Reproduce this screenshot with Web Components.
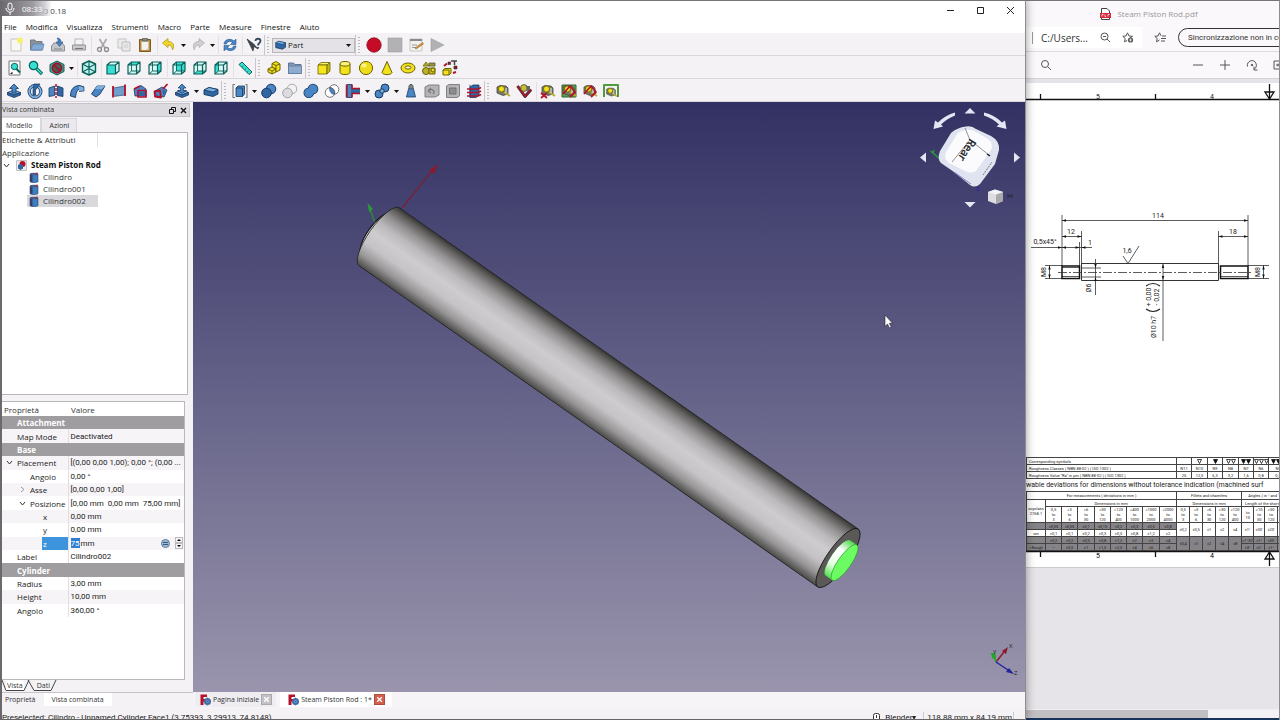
<!DOCTYPE html>
<html lang="it">
<head>
<meta charset="utf-8">
<title>FreeCAD 0.18</title>
<style>
  html, body { margin: 0; height: 100%; overflow: hidden; background: #e6e4e8; }
  body { font: 8px/12px "Open Sans", "Noto Sans", sans-serif; color: #222; }
</style>
</head>
<body>
<desk-top></desk-top>

<script>
/* ---------- helpers ---------- */
const define = (name, css, html, setup) => {
  customElements.define(name, class extends HTMLElement {
    connectedCallback() {
      if (this.shadowRoot) return;
      const root = this.attachShadow({ mode: 'open' });
      const body = typeof html === 'function' ? html(this) : html;
      root.innerHTML = `<style>*{box-sizing:border-box}button,select,input{font:inherit;color:inherit;margin:0;padding:0;border:0;background:none}${css}</style>${body}`;
      if (setup) setup(this, root);
    }
  });
};

/* ---------- icon drawings, 16 x 16 ---------- */
const P = (d, fill = 'none', stroke = 'none', w = 1, extra = '') =>
  `<path d="${d}" fill="${fill}" stroke="${stroke}" stroke-width="${w}" stroke-linejoin="round" ${extra}/>`;
const BL = '#4a86c4', BD = '#173a63', BM = '#2f66a3', LT = '#7fb0e0', TE = '#35e0d2', TD = '#0c5f59', YE = '#f2e21c', YD = '#6b6200', RE = '#b5122a', GY = '#b4b4b6', GD = '#808084';

const faces = {
  front: 'M2 5H10.5V14H2Z', top: 'M2 5L5.5 2H14L10.5 5Z', right: 'M10.5 5L14 2V11L10.5 14Z',
  rear: 'M5.5 2H14V11H5.5Z', bottom: 'M2 14L5.5 11H14L10.5 14Z', left: 'M2 5L5.5 2V11L2 14Z'
};
const wire = f => P('M2 5L5.5 2H14V11L10.5 14H2Z', '#d9f7f3') + P(faces[f], TE) +
  (f === 'front' ? '' : P('M2 14L5.5 11H14M5.5 11V2', 'none', TD, .9)) +
  P('M2 5L5.5 2H14V11L10.5 14H2ZM2 5H10.5V14M10.5 5L14 2', 'none', TD, 1.2);
const solid = (a, b, c, s) => P('M2 5L5 2.5H14L11 5Z', b, s, .8) + P('M2 5H11V14H2Z', a, s, .8) + P('M11 5L14 2.5V11L11 14Z', c, s, .8);
const ball = (x, y, r, f = BL, s = BD) => `<circle cx="${x}" cy="${y}" r="${r}" fill="${f}" stroke="${s}"/>`;
const tape = P('M2 4L5 2.5L11 3L13 5V11L8 12.5L2 10Z', '#77776a', '#4a4a42', .8) +
  `<circle cx="6.5" cy="6" r="3" fill="${YE}" stroke="${YD}" stroke-width=".8"/>` + P('M9 9L15 13', 'none', '#b6ad2e', 1.8) + P('M11 5V10', 'none', '#ddd', 1.2);
const slab = P('M1.5 9.5L8 7L14.5 9.5L8 12Z', LT, BD, .8) + P('M1.5 9.5V12L8 14.5L14.5 12V9.5L8 12Z', BM, BD, .8);

const ICONS = {
  'new': P('M3 2H13V14H3Z', '#f7f7f4', '#c4c4c0') + `<circle cx="12" cy="3.5" r="3" fill="#f7f06a"/>`,
  open: P('M1.5 3H6L7 4.5H13V13H1.5Z', '#8f9398', '#75797e') + P('M1.5 13L4 7H15L13.5 13Z', '#82aad4', '#5a84b2', .8),
  save: P('M1.5 9L4 6H12L14.5 9V14H1.5Z', '#c2c5ca', '#8b8f94') + P('M7 1C10 1 11 3 11 5H13L9.5 9.5L6 5H8C8 3 8 2 7 1Z', '#4d7fb5', '#2d5b8d', .6) + P('M4 12H12', 'none', '#888'),
  print: P('M4 2H12V8H4Z', '#f4f4f4', '#b7b7b7') + P('M1.5 8H14.5V13H1.5Z', '#c9c9cb', '#96969a') + P('M4 11.5H12', 'none', '#777'),
  cut: P('M4.5 2L10 11M11.5 2L6 11', 'none', '#a6a6a8', 1.6) + `<circle cx="4.5" cy="12.5" r="2" fill="none" stroke="#8b8b90" stroke-width="1.3"/><circle cx="11.5" cy="12.5" r="2" fill="none" stroke="#8b8b90" stroke-width="1.3"/>`,
  copy: P('M2 2H10V11H2Z', '#ececec', '#c4c4c6') + P('M6 5H14V14H6Z', '#e8e9e8', '#bcbcbe') + P('M8 8H12M8 10H12', 'none', '#ccc'),
  paste: P('M2.5 2.5H13.5V14.5H2.5Z', '#b78b43', '#7d5a20') + P('M4.5 4.5H11.5V13H4.5Z', '#f4f2ee') + P('M5.5 1.5H10.5V4H5.5Z', '#8c8c8c', '#5c5c5c', .8) + P('M11.5 13V10.5L9 13Z', '#c9c9c9'),
  undo: P('M1.5 6L7 1.5V4.5C12 4.5 14 8 11.5 13C11.5 10 10 8 7 8V10.5Z', '#efd82c', '#b79a0e', .8),
  redo: P('M14.5 6L9 1.5V4.5C4 4.5 2 8 4.5 13C4.5 10 6 8 9 8V10.5Z', '#cfcfd1', '#b0b0b4', .8),
  refresh: P('M2 7C2 3 8 0.5 12 4L14 2V7.5H8.5L10.5 5.5C8 3.5 5 4.5 4.5 7Z', BL, '#26578c', .6) + P('M14 9C14 13 8 15.5 4 12L2 14V8.5H7.5L5.5 10.5C8 12.5 11 11.5 11.5 9Z', BL, '#26578c', .6),
  whats: P('M1 2L7 14L8 9.5L12 12L7.5 6.8Z', '#3c4854', '#222', .6) + `<path d="M9.500 4C9.500 1 14.500 1 14.500 4C14.500 6 12 6 12 8.500M12 10V11.500" fill="none" stroke="#34495e" stroke-width="1.800"/>`,
  rec: `<circle cx="8" cy="8" r="7.200" fill="#c50b26" stroke="#8a0a1b" stroke-width=".8"/>`,
  stop: P('M1 1H15V15H1Z', '#b2b2b4', '#a0a0a2', .6),
  macro: P('M2 2H14V14H2Z', '#f1f1ee', '#bdbdbd', .8) + P('M2 2H14V4H2Z', '#8a8a8c') + P('M4 8H9M4 10.5H8', 'none', '#999') + P('M7 11L14.5 5.5L15.5 7L8 12Z', '#d99a3e', '#8a5a16', .5),
  play: P('M2 1.5L15 8L2 14.5Z', '#b2b2b4', '#9c9c9e', .6),

  fitall: P('M2 1H13V15H2Z', '#fff', '#777') + `<circle cx="7.500" cy="6.500" r="3.200" fill="${TE}" stroke="${TD}"/>` + P('M9.5 9L13 12.5', 'none', TD, 2) + P('M3 14L5.5 11.5V14Z', '#222'),
  fitsel: `<circle cx="5.500" cy="5.500" r="4.200" fill="${TE}" stroke="${TD}" stroke-width="1.200"/>` + P('M8.5 8.5L14 14', 'none', TD, 3.2) + P('M8.8 8.8L13.5 13.5', 'none', TE, 1.4),
  drawstyle: P('M8 1L15 4.5V11.5L8 15L1 11.5V4.5Z', '#4d9c94', TD) + `<circle cx="8" cy="8" r="4.600" fill="#4d5a58" stroke="#a01024" stroke-width="1.700"/>` + P('M5 5L11 11', 'none', '#a01024', 1.7),
  iso: P('M8 1L14.5 4V12L8 15L1.5 12V4Z', '#bdf3ee', TD, 1.4) + P('M1.5 4L8 7.5L14.5 4M8 7.5V15M8 1V7.5M1.5 12L8 8.5L14.5 12', 'none', TD, 1.1),
  vfront: wire('front'), vtop: wire('top'), vright: wire('right'), vrear: wire('rear'), vbottom: wire('bottom'), vleft: wire('left'),
  ruler: P('M2 4.5L5 2L15 12L12 14.5Z', TE, TD) + P('M5 7.3L6.5 6M7.5 9.8L9 8.5M10 12.3L11.5 11', 'none', TD, .8),
  part: P('M2 9L6 7L10 9V12L6 14L2 12Z', YE, YD) + P('M6 3.5L10 1.5L14 4V10L10 12V9L6 7Z', YE, YD) + P('M6 3.5L10 5.5L14 4M10 5.5V9M2 9L6 11L10 9M6 11V14', 'none', YD),
  group: P('M1.5 3H6.5L8 4.5H14V13.5H1.5Z', '#7f98b8', '#5c7594') + P('M1.5 6H14.5V13.5H1.5Z', '#8fabcd', '#5c7ba0', .8),

  box: solid('#f5e51e', '#fbf36a', '#c9bb14', YD),
  cyl: P('M3 4V12.5C3 15.2 13 15.2 13 12.5V4Z', YE, YD) + `<ellipse cx="8" cy="3.800" rx="5" ry="2.300" fill="#faf27a" stroke="${YD}"/>`,
  sphere: ball(8, 8, 6.6, '#eddc1c', YD) + `<ellipse cx="6" cy="5.500" rx="2.500" ry="2" fill="#fbf48a"/>`,
  cone: P('M8 1.5L13 12.5C12 15.3 4 15.3 3 12.5Z', YE, YD),
  torus: `<ellipse cx="8" cy="8" rx="7" ry="5" fill="${YE}" stroke="${YD}"/><ellipse cx="8" cy="7.500" rx="3" ry="1.600" fill="#f4f2f5" stroke="${YD}"/>`,
  prims: P('M2 6L5 2L8 6Z', '#b6ad2e', YD, .8) + P('M8 3H14V6H8Z', '#9b9748', '#5a5620', .8) + ball(5, 11, 3.5, '#b9b032', YD) + P('M8 8H14V14H8Z', '#c7bd24', YD) + ball(12, 10, 2, '#e3d836', YD),
  shape: P('M1 10L3 8.5H9V13L7 15H1Z', YE, YD) + P('M1 10H7V15', 'none', YD) + P('M9 1H15M12.5 1V5', 'none', '#444', 1.5) + P('M2 6L5 3.5M12 7L14.5 8.5M11 13L14 12', 'none', RE, 2) + P('M12 6H15V9H12ZM6 2H8.5V4.5H6Z', '#8b1b2a', '#333', .6),

  extrude: slab + P('M8 1L12.5 5.5H10V10H6V5.5H3.5Z', BL, BD, .8),
  revolve: `<circle cx="8" cy="8.500" r="5.800" fill="none" stroke="${BD}" stroke-width="3.400"/><circle cx="8" cy="8.500" r="5.800" fill="none" stroke="${LT}" stroke-width="1.900"/>` + P('M7 1H13L8.5 7V12H6V7Z', BM, BD, .7),
  mirror: P('M1 5L6.5 3V12.5L1 13.5Z', BL, BD, .8) + P('M15 5L9.5 3V12.5L15 13.5Z', BM, BD, .8) + P('M8 1V15', 'none', RE, 1.5, 'stroke-dasharray="3 1"'),
  fillet: P('M1.5 13C1.5 6 5 3 10 2.5L15 4C9.5 5 7 8 6.5 14.5Z', BL, BD, .9) + P('M10 2.5L15 4V8L10 8.5', LT, BD, .7),
  chamfer: P('M1.5 11L7 3H15L10 11L6 14Z', BL, BD, .9) + P('M7 3H15L12 6H5Z', LT),
  ruled: P('M2 5L14 3V12L2 13.5Z', '#6f9dcc', BD, .6) + P('M2 3V14.5M14 1.5V13', 'none', RE, 1.8),
  loft: P('M2 6L9 2.5L14 6V13L3 13Z', BL, BD, .8) + P('M6 7.5H14V14H6ZM2 6L8 3', 'none', RE, 1.7) + P('M7 8.5H13V13H7Z', BM),
  sweep: P('M2 8L9 4L14 7L11 14L3 13Z', BL, BD, .8) + P('M1.5 8.5L7 7.5L8 14.5L2 13.5ZM10 6L14.5 1', 'none', RE, 1.8) + P('M9 7L13 8L11 13Z', BM),
  offset: slab + P('M8 1L12 5H9.5V7.5H12.5L8 10.5L3.5 7.5H6.5V5H4Z', BL, BD, .7),
  thick: P('M1 7L6 4.5L15 6.5V11L10 13.5L1 11.5Z', BM, BD, .9) + P('M1 7L6 4.5L15 6.5L10 9Z', LT, BD, .8),
  compound: P('M4 5L6 3H12.5V11L10.5 13.5H4Z', BL, BD, .8) + P('M4 5H10.5V13.5', 'none', BD, .8) + P('M3 1.5H1V14.5H3M13.5 1.5H15V14.5H13.5', 'none', '#777', 1.1),
  boolean: ball(10, 6, 4.8, BL) + ball(5.5, 10, 4.8, BM),
  cutb: ball(10, 6, 4.8, '#f3f1f4', '#aaa') + ball(5.5, 10, 4.8, '#dcdcde', '#a3a3a6'),
  union: `<g stroke="${BD}" stroke-width="2"><circle cx="10" cy="6" r="4.300"/><circle cx="5.800" cy="9.800" r="4.300"/></g><g fill="${BL}"><circle cx="10" cy="6" r="4.500"/><circle cx="5.800" cy="9.800" r="4.500"/></g>`,
  inter: `<circle cx="10" cy="6.500" r="4.800" fill="#fff" stroke="#777"/><circle cx="6" cy="9.500" r="4.800" fill="#fff" stroke="#777"/>` + P('M5.7 4.7C8 4.4 10.8 7 10.4 11.2C8 11.5 5.2 9 5.7 4.7Z', BL, BD, .6),
  join: P('M2 1.5H7V14.5H2Z', BL, BD, .8) + P('M7 5.5H15V10.5H7Z', BM) + P('M1.5 1.5V14.5M7 1.5V5.5H15M7 14.5V10.5H15', 'none', RE, 1.5),
  split: ball(11, 5, 4) + ball(5, 11, 4) + `<circle cx="8" cy="8" r="2.200" fill="${LT}" stroke="${BD}"/>`,
  check: P('M5.5 6L8 1L10.5 6L12.5 14H3.5Z', BL, BD, .8) + `<circle cx="8" cy="3.800" r="2.200" fill="#7e8890" stroke="#444" stroke-width=".7"/>`,
  defeat: P('M1 4L5 2H15V12L11 14H1Z', GY, GD) + P('M4 8C8 5 12 8 9 11M4 8L7 5M4 8L7 10', 'none', '#77777a', 1.3),
  defeat2: P('M1.5 3L4 1.5H14.5V13L12 14.5H1.5Z', GY, GD) + P('M4.5 5H11V11H4.5Z', '#8c8c90', '#707074'),
  section: P('M4 4L7 2H13V12L10 14.5H4Z', BM, BD, .8) + P('M4 1.8V14.5', 'none', BD, .8) + P('M1 6H12L15 4.5M1 9.5H12L15 8M1 13H12L15 11.5', 'none', RE, 1.6),

  mlin: tape,
  mang: P('M1.5 3L9 13.5L15 6.5', 'none', '#333', 3) + P('M1.5 3L9 13.5L15 6.5', 'none', RE, 1.5) + `<circle cx="8" cy="5" r="3.400" fill="#c9c02d" stroke="#444" stroke-width=".8"/><path d="M10 3H14V7L11 8Z" fill="#666"/>`,
  mclr: tape + P('M1 10L7 15M7 10L1 15', 'none', RE, 1.8),
  mall: P('M1 2H15V14H1Z', '#5c9b52', '#35682d') + tape + P('M2 11L9 3L14 9L9 14', 'none', RE, 1.8),
  m3d: tape + P('M2 11L9 3L14 9L9 14', 'none', RE, 1.8),
  mdelta: P('M1 14V2H15V14', 'none', '#4f9a3f', 2) + `<g transform="translate(2 3) scale(.8)">${tape}</g>`
};

define('x-icon', ':host{display:block;width:16px;height:16px;flex:none}svg{display:block;width:100%;height:100%}',
  el => `<svg viewBox="0 0 16 16" aria-hidden="true">${ICONS[el.getAttribute('name')]}</svg>`);

define('tool-button', ':host{display:block;flex:none}button{display:grid;place-items:center;width:21px;height:20px}',
  el => `<button type="button" aria-label="${el.getAttribute('name')}"><x-icon name="${el.getAttribute('name')}"></x-icon></button>`);
define('tool-arrow', ':host{display:block;flex:none}button{display:grid;place-items:center;width:8px;height:20px}',
  '<button type="button" aria-label="menu"><svg width="5" height="3" viewBox="0 0 5 3"><path d="M0 0H5L2.5 3Z" fill="#111"/></svg></button>');
define('tool-gap', ':host{display:block;flex:none;width:3px;height:18px;border-right:1px solid #e2e0e4}', '');
define('tool-handle', ':host{display:block;flex:none;width:8px;height:20px;border-left:1px solid #c9c7cc;padding:2px 0 2px 2px}i{display:block;width:2px;height:100%;background:repeating-linear-gradient(#bbb 0 1px,transparent 1px 3px)}', '<i></i>');

define('tool-row', ':host{display:flex;align-items:center;height:23px;box-sizing:border-box;padding:2px 0 0 var(--start,2px);background:#f4f2f5;border-bottom:1px solid #d8d6da}',
  el => el.getAttribute('items').trim().split(/\s+/).map(t =>
    t === 'v' ? '<tool-arrow></tool-arrow>' : t === '-' ? '<tool-gap></tool-gap>' : t === '|' ? '<tool-handle></tool-handle>' :
    t === '@' ? '<workbench-select></workbench-select>' : `<tool-button name="${t}"></tool-button>`).join(''));

define('workbench-select', `:host{display:flex;align-items:center;box-sizing:border-box;flex:none;position:relative;width:83px;height:15px;background:#e4e2e6;border:1px solid #b9b7bc}
  svg.b{flex:none;width:12px;height:12px;margin-left:2px}select{appearance:none;flex:1;min-width:0;height:12px;line-height:12px;padding-left:1px}svg.a{flex:none;margin-right:3px}`,
  `<svg class="b" viewBox="0 0 16 16">${P('M1 5L5 3L14 5V11L10 13.5L1 11.5Z', BM, BD)}${P('M1 5L5 3L14 5L10 7Z', LT, BD, .6)}</svg>
  <select aria-label="Ambiente"><option>Part</option></select><svg class="a" width="5" height="3" viewBox="0 0 5 3"><path d="M0 0H5L2.5 3Z" fill="#111"/></svg>`);

/* ---------- window title and menu ---------- */
define('title-bar', `:host{display:flex;align-items:center;height:19px;background:#fff;position:relative}
  .name{flex:1;padding-left:14px;color:#444}
  .rec{position:absolute;left:0;top:0;width:50px;height:15px;padding-left:2px;display:flex;align-items:center;gap:6px;color:#fff;background:linear-gradient(90deg,#6d6b70,#9b999e 60%,#c9c8ccdd 85%,#fff0)}
  button{width:30px;height:18px;display:grid;place-items:center}`,
  `<span class="name">FreeCAD 0.18</span>
  <div class="rec"><svg width="12" height="14" viewBox="0 0 12 14"><rect x="4" y="1" width="4" height="7" rx="2" fill="none" stroke="#fff"/><path d="M2 6C2 11.500 10 11.500 10 6M6 10V13" fill="none" stroke="#fff"/></svg><span>08:33</span></div>
  <button aria-label="Riduci"><svg width="9" height="9"><path d="M1 4.500H8" stroke="#222"/></svg></button>
  <button aria-label="Ingrandisci"><svg width="9" height="9"><path d="M1.500 1.500H7.500V7.500H1.500Z" fill="none" stroke="#222"/></svg></button>
  <button aria-label="Chiudi"><svg width="9" height="9"><path d="M1 1L8 8M8 1L1 8" stroke="#222"/></svg></button>`);

define('menu-bar', ':host{display:flex;gap:9px;height:13px;padding-left:2px;background:#fff}button{line-height:12px;white-space:nowrap;color:#111}',
  ['File', 'Modifica', 'Visualizza', 'Strumenti', 'Macro', 'Parte', 'Measure', 'Finestre', 'Aiuto'].map(t => `<button type="button">${t}</button>`).join(''));

/* ---------- combined view ---------- */
const chev = open => `<svg width="7" height="7" viewBox="0 0 7 7" aria-hidden="true"><path d="${open ? 'M1 2L3.500 5L6 2' : 'M2 1L5 3.500L2 6'}" fill="none" stroke="${open ? '#333' : '#999'}"/></svg>`;

define('model-tree', `:host{display:block;box-sizing:border-box;background:#fff;border:1px solid #b9b7bc;border-left:0;overflow:hidden}
  .h{line-height:14px;height:14px;width:96px;border-right:1px solid #e2e0e4}
  .g{line-height:12px}
  ul{margin:0;padding:0;list-style:none}
  li{display:flex;align-items:center;gap:4px;height:12px;line-height:12px}
  .doc{padding-left:1px;gap:4px;font-weight:700;color:#111}
  .doc svg:first-child{margin-right:2px}
  .obj{margin-left:25px;padding-left:2px;width:71px;gap:4px}
  .sel{background:#d9d8dc}`,
  `<div class="h">Etichette &amp; Attributi</div><div class="g">Applicazione</div>
  <ul><li class="doc">${chev(true)}<svg width="11" height="11" viewBox="0 0 11 11"><path d="M.5.500H10.500V10.500H.500Z" fill="#e9e9ec" stroke="#c4c4c8"/><circle cx="6.500" cy="4" r="3" fill="${RE}"/><path d="M2 5L4.500 4L7 5V8.500L4.500 10L2 8.500Z" fill="${BM}"/></svg>Steam Piston Rod</li>
  ${['Cilindro', 'Cilindro001', 'Cilindro002'].map((t, i) => `<li class="obj${i === 2 ? ' sel' : ''}"><svg width="10" height="11" viewBox="0 0 10 11"><path d="M1 2V9.500C1 11 9 11 9 9.500V2Z" fill="#3c7fc0" stroke="#2a3f66" stroke-width=".6"/><path d="M1 2H3.500V10.500L1 9.500Z" fill="#37406a"/><ellipse cx="5" cy="2" rx="4" ry="1.300" fill="#4d5c86"/><path d="M8 .500V3" stroke="${RE}"/></svg>${t}</li>`).join('')}</ul>`);

const PROPS = [
  ['g', 'Attachment'], ['Map Mode', 'Deactivated', 0], ['g', 'Base'],
  ['Placement', '[(0,00 0,00 1,00); 0,00 °; (0,00 ...', 0, 'o'], ['Angolo', '0,00 °', 1], ['Asse', '[0,00 0,00 1,00]', 1, 'c'],
  ['Posizione', '[0,00 mm&nbsp; 0,00 mm&nbsp; 75,00 mm]', 1, 'o'], ['x', '0,00 mm', 2], ['y', '0,00 mm', 2], ['z', null, 2],
  ['Label', 'Cilindro002', 0], ['g', 'Cylinder'], ['Radius', '3,00 mm', 0], ['Height', '10,00 mm', 0], ['Angolo', '360,00 °', 0]
];
define('property-editor', `:host{display:block;box-sizing:border-box;background:#fff;border:1px solid #b9b7bc;border-left:0;overflow:hidden}
  table{width:100%;height:215px;table-layout:fixed;border-collapse:collapse;line-height:11px}
  col.n{width:66px} th,td{padding:0;text-align:left;font-weight:400;white-space:nowrap;vertical-align:middle;color:#222}
  thead tr{height:14px} thead th{padding-left:2px;color:#333} td{padding-left:2px;border-left:1px solid #e0dee2}
  td{font-family:"Roboto",sans-serif}
  tbody tr:nth-child(even){background:#f6f4f7}
  tbody tr.g th{background:#9f9da0;color:#fff;font-weight:700;padding-left:15px}
  .k{display:flex;align-items:center;padding-left:var(--in)} .k i{display:block;width:13px;flex:none;line-height:0;padding-left:2px}
  .z{background:linear-gradient(90deg,transparent 40px,#3d93dc 40px);color:#fff}
  .ed{display:flex;align-items:center;height:11px}
  input{width:9px;height:10px;background:#2f7fd0;color:#fff}
  label{flex:1;padding-left:1px}.sp{display:grid;width:8px;margin:0 1px 0 5px}.sp button{height:6px;border:1px solid #bbb;display:grid;place-items:center;background:#f4f4f4;line-height:0}`,
  `<table><colgroup><col class="n"><col></colgroup><thead><tr><th>Proprietà</th><th style="padding-left:3px">Valore</th></tr></thead><tbody>${
    PROPS.map(([n, v, l, x]) => n === 'g' ? `<tr class="g"><th colspan="2">${v}</th></tr>` :
      `<tr><th class="${n === 'z' ? 'z' : ''}"><div class="k" style="--in:${[2, 15, 28][l]}px"><i>${x ? chev(x === 'o') : ''}</i>${n}</div></th><td>${v ??
        `<div class="ed"><input id="z" value="75"><label for="z">mm</label><svg width="9" height="9" viewBox="0 0 9 9"><circle cx="4.500" cy="4.500" r="4" fill="#9fb8cf" stroke="#5c7fa2"/><path d="M2 3.500H7M2 5.500H7" stroke="#2f5b86"/></svg><span class="sp"><button aria-label="più"><svg width="4" height="2"><path d="M0 2L2 0L4 2Z"/></svg></button><button aria-label="meno"><svg width="4" height="2"><path d="M0 0L2 2L4 0Z"/></svg></button></span></div>`}</td></tr>`).join('')
  }</tbody></table>`);

define('combo-view', `:host{display:flex;flex-direction:column;box-sizing:border-box;min-height:0;padding-top:1px;background:#f4f2f5;color:#333}
  header,.tabs,.cut,.low{font-size:7px}
  header{display:flex;align-items:center;height:14px;margin-right:3px;background:#dcdade;border:1px solid #c6c4c9;border-left:0}
  header span{flex:1} header button{width:11px;height:11px;display:grid;place-items:center}
  .tabs{display:flex;align-items:flex-end;height:15px}
  .tabs button{height:14px;line-height:13px;padding:0 7px;background:#ebe9ed;border:1px solid #d9d7db;border-bottom:0}
  .tabs button.on{background:#fff;height:15px;padding:0 8px 0 4px;border-left:0}
  model-tree{flex:263;min-height:0;margin-right:5px} property-editor{flex:279;min-height:0;margin:6px 8px 0 0}
  .cut{display:flex;height:13px;align-items:flex-start;border-bottom:1px solid #c6c4c9}
  .cut button{line-height:11px;height:11px;padding:0 1px;border-bottom:1px solid #444}.cut .on{background:#fff}
  .low{display:flex;height:15px}.low button{height:13px;line-height:13px;padding:0 8px 0 3px}.low .on{background:#fff;padding:0 8px}`,
  `<header><span>Vista combinata</span><button aria-label="Sgancia"><svg width="7" height="7" viewBox="0 0 7 7"><path d="M2.500 2V.500H6.500V4.500H5M.500 2.500H4.500V6.500H.500Z" fill="none" stroke="#111"/></svg></button><button aria-label="Chiudi"><svg width="7" height="7" viewBox="0 0 7 7"><path d="M1 1L6 6M6 1L1 6" stroke="#111" stroke-width="1.400"/></svg></button></header>
  <div class="tabs"><button class="on">Modello</button><button>Azioni</button></div>
  <model-tree></model-tree><property-editor></property-editor>
  <div class="cut"><svg width="4" height="11"><path d="M0 0L4 10.500" stroke="#444" fill="none"/></svg><button class="on">Vista</button><svg width="12" height="11"><path d="M0 10.500L5 0M4 0L10 10.500H12" stroke="#444" fill="none"/></svg><button>Dati</button><svg width="6" height="11"><path d="M0 10.500L5 0" stroke="#444" fill="none"/></svg></div>
  <div class="low"><button>Proprietà</button><button class="on">Vista combinata</button></div>`);

/* ---------- 3D view ---------- */
define('view-3d', `:host{display:block;min-height:0;overflow:hidden;background:linear-gradient(#333163,#67658a 52%,#9a95ad)}
  svg{display:block;width:100%;height:100%} text{font-family:"Open Sans",sans-serif}`,
  `<svg viewBox="193 102 832 590" preserveAspectRatio="xMidYMid slice">
  <defs><linearGradient id="s" x1="0" y1="0" x2="0" y2="1"><stop offset="0" stop-color="#363634"/><stop offset=".08" stop-color="#62615f"/><stop offset=".2" stop-color="#949293"/><stop offset=".34" stop-color="#bcb9bc"/><stop offset=".5" stop-color="#cfccd0"/><stop offset=".68" stop-color="#c6c3c6"/><stop offset=".85" stop-color="#979596"/><stop offset="1" stop-color="#4a4a48"/></linearGradient>
  <linearGradient id="g" x1="0" y1="0" x2="0" y2="1"><stop offset="0" stop-color="#4fd94a"/><stop offset=".3" stop-color="#fff"/><stop offset=".7" stop-color="#e6ffe4"/><stop offset="1" stop-color="#4fe04a"/></linearGradient></defs>
  <path d="M375 223L370 209" stroke="#2c8a38" stroke-width="1.500"/><path d="M367.500 203L373 209L369 212Z" fill="#2c9a38"/>
  <path d="M402 208L431 172" stroke="#7c1f35" stroke-width="1.200"/><path d="M438 164L434 174L429 170.500Z" fill="#8c1a2b"/>
  <g transform="translate(838 558) rotate(35)">
    <ellipse cx="-565" cy="0" rx="7.500" ry="24" fill="#dcd9de" stroke="#111"/>
    <path d="M-560 -35.300A10.800 35.300 0 0 0 -560 35.300H0V-35.300Z" fill="url(#s)" stroke="#222" stroke-width=".8"/>
    <ellipse rx="10.800" ry="35.300" fill="#5a5958" stroke="#111" stroke-width=".8"/>
    <path d="M0 -21.500A6.600 21.500 0 0 0 0 21.500H8V-21.500Z" fill="url(#g)"/>
    <ellipse cx="8" cy="0" rx="6.600" ry="21.500" fill="#6cfb62" stroke="#2aa32a" stroke-width=".7"/>
  </g>
  <g fill="#e4e6f4"><path d="M964.500 113.500L970 108L975.500 113.500ZM964.500 202L970 207.500L975.500 202ZM926 152.500V162.500L920 157.500ZM1014 152.500V162.500L1020 157.500Z"/><path d="M933.500 129L935 120.500L938 122.500C943 117.500 949 114 955 112.500V115.500C950 117.500 945 120.500 941 124.500L943 126.500ZM1006.500 129L1005 120.500L1002 122.500C997 117.500 991 114 984 112.500V115.500C990 117.500 995 120.500 999 124.500L996.500 126.500Z"/></g>
  <path d="M948 166L933 153M933 153L930.500 151M933 153L934 150" stroke="#2c9a38" stroke-width="1.500" fill="none"/>
  <path d="M966 126.500Q972 125.500 976 129L991 136Q1000 141 999 150L995 164L980 184Q975 188.500 970 185L954 172L941 163Q937 159 940 151L951 133Q957 127.500 966 126.500Z" fill="#dfe4f0"/>
  <path d="M962 131Q970 128 976 132L988 139Q994 144 991 150L976 171Q971 174 965 171L949 163Q943 158 946 152L956 136Q958 132 962 131Z" fill="#fbfbfd"/>
  <path d="M965 128L970 140L989 155M970 140L952 162" stroke="#777" stroke-width=".8" fill="none"/><path d="M954 172L971 184" stroke="#8b89c4" fill="none"/><path d="M987 154L990 156" stroke="#222" stroke-width="1.500"/><path d="M983 175L992 162" stroke="#777" stroke-dasharray="2 1" fill="none"/>
  <text transform="translate(970 138) rotate(122)" font-size="11" fill="#111" stroke="#111" stroke-width=".3">Rear</text>
  <text x="976" y="191" font-size="6" fill="#1d1db8">Z</text>
  <path d="M988 192L995 189.500L1003 192V201L996 204L988 201Z" fill="#dedee2"/><path d="M996 194.500L1003 192V201L996 204Z" fill="#a9a9ae"/><path d="M988 192L995 189.500L1003 192L996 194.500Z" fill="#f4f4f6"/><path d="M1007 196H1013" stroke="#33324d" stroke-width="3"/>
  <path d="M885 315V326.500L887.500 324L889.500 328L891.300 327L889.300 323.300H892.500Z" fill="#fff" stroke="#222" stroke-width=".6"/>
  <path d="M996 662L1004 652" stroke="#8c1a2b" stroke-width="1.500"/><path d="M1008 647L1006 654L1002 651Z" fill="#8c1a2b"/><path d="M996 662L994 656" stroke="#25a32c" stroke-width="1.500"/><path d="M991 653H995.500L996 660L992 658Z" fill="#25a32c"/><path d="M996 662L1008 670" stroke="#25259a" stroke-width="1.500"/><path d="M1014 674L1006 672L1009 668Z" fill="#25259a"/>
  <g font-size="6" fill="#222"><text x="1009" y="648">X</text><text x="993" y="654">Y</text><text x="1014" y="675">Z</text></g></svg>`);

const fc = `<svg width="11" height="12" viewBox="0 0 11 12" aria-hidden="true"><path d="M.5.500H7V3H3.500V5H6V7.500H3.500V11H.500Z" fill="#b5122a"/><circle cx="7.500" cy="7.500" r="2.600" fill="none" stroke="#3e6da8" stroke-width="1.800"/><path d="M7.500 3.500V11.500M3.500 7.500H11M5 5L10 10M10 5L5 10" stroke="#3e6da8" stroke-width=".8"/></svg>`;
define('mdi-tabs', `:host{display:flex;box-sizing:border-box;gap:4px;height:16px;padding-left:2px;background:#f6f4f7;font-size:7px}
  div{display:flex;align-items:center;height:15px;gap:2px;padding:0 5px;background:#efedf1;color:#333} .on{background:#fff;padding:0 8px}
  button{width:9px;height:9px;display:grid;place-items:center;margin-left:1px;background:#c4c2c6;outline:1px solid #aaa} .on button{background:#d4604e;outline-color:#b04a3a}`,
  `<div>${fc}<span>Pagina iniziale</span><button aria-label="Chiudi"><svg width="5" height="5"><path d="M0 0L5 5M5 0L0 5" stroke="#fff" stroke-width="1.300"/></svg></button></div>
  <div class="on">${fc}<span>Steam Piston Rod : 1*</span><button aria-label="Chiudi"><svg width="5" height="5"><path d="M0 0L5 5M5 0L0 5" stroke="#fff" stroke-width="1.300"/></svg></button></div>`);

define('status-bar', `:host{display:flex;box-sizing:border-box;height:12px;padding-top:4px;overflow:hidden;background:#f4f2f5;border-bottom:1px solid #666;white-space:nowrap;font-family:"Roboto",sans-serif;line-height:12px}
  .m{flex:1} button{display:flex;height:12px;line-height:12px;gap:5px;margin-right:7px} .d{border-left:1px solid #ccc;border-right:1px solid #ccc;padding:0 1px 0 3px;margin-right:11px;height:12px}`,
  `<span class="m">Preselected: Cilindro - Unnamed.Cylinder.Face1 (3.75393, 3.29913, 74.8148)</span>
  <button><svg width="7" height="12" viewBox="0 0 7 12"><rect x=".5" y="1.500" width="6" height="9" rx="2" fill="#fff" stroke="#333"/><path d="M3.500 3V6" stroke="#333"/></svg><span>Blender▾</span></button>
  <span class="d">118.88 mm x 84.19 mm</span>`);

define('cad-window', `:host{display:grid;box-sizing:border-box;grid-template-rows:auto auto auto auto auto minmax(0,1fr) auto;min-width:0;height:100%;position:relative;z-index:1;border-left:2px solid #6b696e;border-top:1px solid #77757a;border-right:1px solid #8f8d94;box-shadow:0 0 9px #0006;background:#f4f2f5}
  main{display:grid;grid-template-columns:191px minmax(0,1fr);min-height:0} .doc{display:grid;grid-template-rows:minmax(0,1fr) auto;min-height:0;min-width:0}`,
  `<title-bar></title-bar><menu-bar></menu-bar>
  <tool-row style="--start:3px" items="new open save print - cut copy paste - undo v redo v - refresh - whats | @ | rec stop macro play"></tool-row>
  <tool-row items="fitall fitsel drawstyle v - iso - vfront vtop vright - vrear vbottom vleft - ruler | part group | box cyl sphere cone torus prims shape"></tool-row>
  <tool-row style="--start:1px" items="extrude revolve mirror fillet chamfer ruled loft sweep offset v thick | compound v boolean cutb union inter join v split v check defeat defeat2 section | mlin mang - mclr mall m3d mdelta"></tool-row>
  <main><combo-view></combo-view><div class="doc"><view-3d></view-3d><mdi-tabs></mdi-tabs></div></main><status-bar></status-bar>`);

/* ---------- browser with the PDF drawing ---------- */
define('browser-bars', `:host{display:block;background:#faf8fb;color:#444}
  .t{display:flex;align-items:center;justify-content:center;gap:6px;height:25px;padding-right:7px;color:#999}
  .a{display:flex;align-items:center;height:26px;border-bottom:1px solid #dddbdf;overflow:hidden;padding-bottom:2px}
  .box{display:flex;align-items:center;flex:none;width:116px;height:21px;padding-left:6px;background:#fff;gap:11px} .box a{flex:none;color:#333;text-decoration:none;font-size:10px;border-left:1px solid #999;padding-left:8px;width:56px}
  .box button{width:12px}
  button{display:grid;place-items:center;flex:none} .star{width:36px}
  .pill{height:19px;width:150px;place-items:center start;padding-left:9px;border:1px solid #333;border-radius:10px;color:#333;white-space:nowrap;font-family:"Roboto",sans-serif}
  .p{display:flex;align-items:center;height:27px;gap:15px;padding-left:14px;border-bottom:1px solid #d5d3d7} .p i{flex:1} .p > :last-child{margin-right:-6px}
  svg{display:block;fill:none;stroke:#555}`,
  `<div class="t"><svg width="11" height="12" viewBox="0 0 11 12"><path d="M1.500.500H7L9.500 3V11.500H1.500Z" fill="#fff" stroke="#444"/><path d="M0 5H11V10H0Z" fill="#d32b3c" stroke="none"/><path d="M2 8.500V6.500H3.500M5 6.500V8.500H6M8 8.500V6.500H9.500" stroke="#fff" stroke-width=".8"/></svg><span>Steam Piston Rod.pdf</span></div>
  <div class="a"><div class="box"><a href="#">C:/Users...</a><button aria-label="Zoom"><svg width="11" height="11"><circle cx="4.500" cy="4.500" r="3.500"/><path d="M7 7L10 10M3 4.500H6"/></svg></button><button aria-label="Preferito"><svg width="12" height="11" viewBox="0 0 12 11"><path d="M8 6L10.500 4.300L7 4L5.500.800L4 4L.800 4.300L3.200 6.500L2.500 9.800L5 8.500"/><circle cx="8.500" cy="8" r="2.600" fill="#555" stroke="none"/><path d="M7 8H10M8.500 6.500V9.500" stroke="#fff" stroke-width=".7"/></svg></button></div>
  <button class="star" aria-label="Preferiti"><svg width="12" height="11" viewBox="0 0 12 11"><path d="M7 3.800L5.500.800L4 4L.800 4.300L3.200 6.500L2.500 9.800L5.500 8M8 4H12M7 6.500H12M7 9H11"/></svg></button><button class="pill">Sincronizzazione non in corso</button></div>
  <div class="p"><button aria-label="Cerca"><svg width="12" height="12"><circle cx="5" cy="5" r="3.500"/><path d="M8 8L11 11"/></svg></button><i></i><button aria-label="Riduci"><svg width="12" height="12"><path d="M1 6H11"/></svg></button><button aria-label="Ingrandisci"><svg width="12" height="12"><path d="M1 6H11M6 1V11"/></svg></button><button aria-label="Ruota"><svg width="12" height="12"><path d="M1.500 7.500C0 2 8 -1 10 4.500C11 7 10 9 8 10.500M8 7.500V11H11.500"/><circle cx="6" cy="6" r=".8" fill="#555"/></svg></button><button aria-label="Adatta"><svg width="12" height="10"><path d="M1 1H11V9H1ZM3 5H6M5 3.500V6.500"/></svg></button></div>`);

const ARR = (x, y, dx, dy) => dx ? `M${x} ${y}L${x + dx * 4} ${y - 1.2}V${y + 1.2}Z` : `M${x} ${y}L${x - 1.2} ${y + dy * 4}H${x + 1.2}Z`;
define('rod-drawing', `:host{display:block}svg{display:block;width:254px;height:374px}text{font:7px "Roboto",sans-serif;fill:#222}`,
  `<svg viewBox="1026 83 254 374"><g fill="none" stroke="#333" stroke-width=".8">
  <path d="M1026 99.500H1280M1040.500 94V99.500M1155.500 94V99.500M1269.500 84V99" stroke="#111" stroke-width="1.300"/><path d="M1265 92H1274L1269.500 99Z" stroke="#111" stroke-width="1.300"/>
  <path d="M1062 220.500H1248M1062 215V266M1248 215V266M1062 236.500H1081.500M1081.500 231V264M1218.500 236.500H1248M1218.500 231V264M1031 247.500H1092M1079.500 242V266M1123 256L1128 263.500L1139 246"/>
  <path d="M1045 265.500H1062M1045 278.500H1062M1049.500 265V279M1248 265.500H1269M1248 278.500H1269M1263.500 265V279M1095.500 259V295M1081 268H1101M1081 277H1101M1163 264V341M1062 276.500H1080M1062 267.500H1080M1221 276.500H1248"/>
  <path d="M1081.500 263.500H1218.500V280.500H1081.500Z" stroke-width="1"/><path d="M1062 266H1079.500V278.500H1062ZM1220.500 266H1248V278.500H1220.500Z" stroke="#111" stroke-width="1.500"/><path d="M1058 272.500H1253" stroke-dasharray="9 2 2 2"/></g>
  <path fill="#111" d="${ARR(1062, 220.5, 1) + ARR(1248, 220.5, -1) + ARR(1062, 236.5, 1) + ARR(1081.5, 236.5, -1) + ARR(1218.5, 236.5, 1) + ARR(1248, 236.5, -1) + ARR(1062, 247.5, -1) + ARR(1062, 247.5, 1) + ARR(1079.5, 247.5, -1) + ARR(1081.5, 247.5, 1) + ARR(1049.5, 265.5, 0, 1) + ARR(1049.5, 278.5, 0, -1) + ARR(1263.5, 265.5, 0, 1) + ARR(1263.5, 278.5, 0, -1) + ARR(1095.5, 268, 0, -1) + ARR(1095.5, 277, 0, 1) + ARR(1163, 264, 0, 1) + ARR(1163, 280, 0, -1)}"/>
  <g text-anchor="middle"><text x="1098" y="99">5</text><text x="1212" y="99">4</text><text x="1158" y="218">114</text><text x="1071" y="234">12</text><text x="1233" y="234">18</text><text x="1045" y="244">0,5x45°</text><text x="1090" y="245">1</text><text x="1127" y="253">1,6</text>
  <text transform="translate(1046 272) rotate(-90)">M8</text><text transform="translate(1260 272) rotate(-90)">M8</text><text transform="translate(1091 288) rotate(-90)">Ø6</text>
  <text transform="translate(1156 327) rotate(-90)">Ø10 h7</text><text transform="translate(1151 297) rotate(-90)">+ 0,00</text><text transform="translate(1159 297) rotate(-90)">- 0,02</text></g>
  <path d="M1146 309Q1153 314 1160 309M1146 286Q1153 281 1160 286" fill="none" stroke="#222" stroke-width="1.200"/></svg>`);

const tri = (n, full) => `<svg width="${n * 5}" height="5" viewBox="0 0 ${n * 5} 5">${Array.from({ length: n }, (_, i) => `<path d="M${i * 5 + .5} .500H${i * 5 + 4.5}L${i * 5 + 2.5} 4.500Z" fill="${full ? '#111' : '#fff'}" stroke="#111" stroke-width=".8"/>`).join('')}</svg>`;
const cols = a => `<colgroup>${a.map(w => `<col style="width:${w}px">`).join('')}</colgroup>`;
const td = (a, x = '') => a.map(t => `<td ${x}>${t}</td>`).join('');
define('tolerance-tables', `:host{display:block;overflow:hidden}
  table{width:261px;table-layout:fixed;border-collapse:collapse;font:4px/5px "Roboto",sans-serif;color:#222}
  td,th{padding:0;border:1px solid #444;text-align:center;font-weight:400;white-space:nowrap;height:7px} td svg{display:block;margin:auto}
  .l{text-align:left;padding-left:2px}.d td{background:#858387}.hh{height:8px}.c th{height:15px}.w,.d .w{background:#fff}
  h2{margin:0;height:12px;font:400 7px/13px "Roboto",sans-serif;white-space:nowrap;color:#222}`,
  `<table>${cols([150, 15, 16, 15, 16, 15, 15, 19])}
  <tr><td class="l">Corresponding symbols</td><td></td><td>${tri(1)}</td><td>${tri(1, 1)}</td><td>${tri(2)}</td><td>${tri(2, 1)}</td><td>${tri(3)}</td><td>${tri(3, 1)}</td></tr>
  <tr><td class="l">Roughness Classes ( NBN 88-02 ) ( ISO 1302 )</td>${td(['N11', 'N10', 'N9', 'N8', 'N7', 'N6', 'N5'])}</tr>
  <tr><td class="l">Roughness Value "Ra" in µm ( NBN 88-02 ) ( ISO 1302 )</td>${td(['25', '12,5', '6,3', '3,2', '1,6', '0,8', '0,4'])}</tr></table>
  <h2>wable deviations for dimensions without tolerance indication (machined surf</h2>
  <table>${cols([19, 16, 16, 17, 16, 16, 16, 17, 17, 13, 13, 13, 13, 13, 12, 11, 13, 10])}
  <tr><th class="hh" colspan="9">For measurements ( deviations in mm )</th><th colspan="5">Fillets and chamfers</th><th colspan="4">Angles ( in ° and ' )</th></tr>
  <tr><th class="hh" rowspan="2">acyclass<br>2768.1</th><th colspan="8">Dimensions in mm</th><th colspan="5">Dimensions in mm</th><th colspan="4">Length of the shortest</th></tr>
  <tr class="c">${['0,5 to 3', '&gt;3 to 6', '&gt;6 to 30', '&gt;30 to 120', '&gt;120 to 400', '&gt;400 to 1000', '&gt;1000 to 2000', '&gt;2000 to 4000', '0,5 to 3', '&gt;3 to 6', '&gt;6 to 30', '&gt;30 to 120', '&gt;120 to 400', 'to 10', '&gt;10 to 50', '&gt;50 to 120', '&gt;120 to 400'].map(t => `<th>${t.replace(/ /g, '<br>')}</th>`).join('')}</tr>
  <tr class="d"><td></td>${td(['±0,05', '±0,05', '±0,1', '±0,15', '±0,2', '±0,3', '±0,5', '±0,8'])}${td(['±0,2', '±0,5', '±1', '±2', '±4', '±1°', "±30'", "±20'", "±10'"], 'class="w" rowspan="2"')}</tr>
  <tr><td>um</td>${td(['±0,1', '±0,1', '±0,2', '±0,3', '±0,5', '±0,8', '±1,2', '±2'])}</tr>
  <tr class="d"><td></td>${td(['±0,2', '±0,2', '±0,5', '±0,8', '±1,2', '±2', '±3', '±4'])}${td(['±0,4', '±1', '±2', '±4', '±8'], 'rowspan="2"')}${td(["±1°30'", '±1°', "±30'", "±15'"])}</tr>
  <tr class="d"><td>r Rough</td>${td(['–', '±0,5', '±1', '±1,5', '±2,5', '±4', '±6', '±8', '±3°', '±2°', '±1°', "±30'"])}</tr></table>`);

define('browser-window', `:host{display:flex;box-sizing:border-box;flex-direction:column;min-width:0;height:100%;overflow:hidden;background:#e6e4e8;border-top:1px solid #77757a;border-right:1px solid #8f8d94}
  browser-bars{flex:none} .page{flex:none;margin-top:4px;background:#fff;overflow:hidden;border-bottom:1px solid #ccc}
  .rule{display:block;width:254px;height:16px} text{font:7px "Roboto",sans-serif}
  .sp{flex:1}.bar{flex:none;height:11px;background:#f3f1f4;border-top:1px solid #eee;border-bottom:2px solid #17355c}.bar i{display:block;width:72%;height:8px;background:#c1bfc2}`,
  `<browser-bars></browser-bars><div class="page"><rod-drawing></rod-drawing><tolerance-tables></tolerance-tables>
  <svg class="rule" viewBox="1026 552 254 16"><path d="M1026 552.500H1280M1040.500 552V558M1155.500 552V558M1269.500 553V567M1265 560H1274L1269.500 553Z" fill="none" stroke="#111" stroke-width="1.300"/><g text-anchor="middle"><text x="1098" y="559">5</text><text x="1212" y="559">4</text></g></svg></div>
  <div class="sp"></div><div class="bar"><i></i></div>`);

define('desk-top', ':host{display:grid;grid-template-columns:minmax(0,1026fr) minmax(0,254fr);height:100vh}', '<cad-window></cad-window><browser-window></browser-window>');
</script>
</body>
</html>
